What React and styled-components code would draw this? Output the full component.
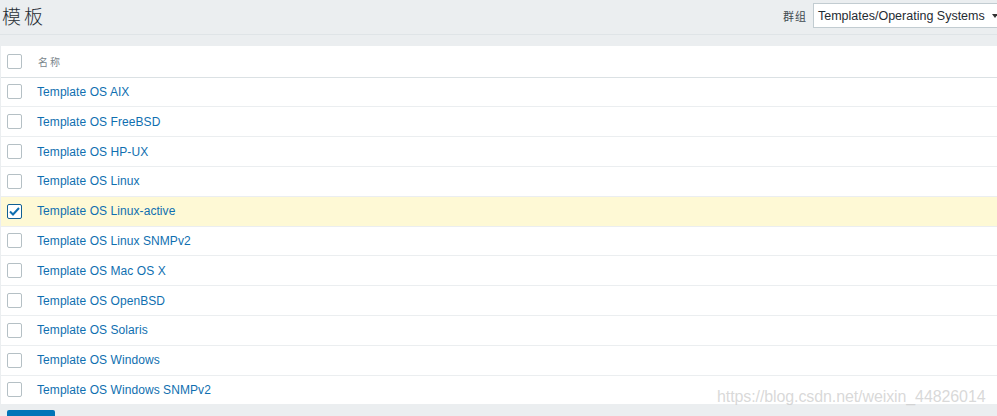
import React from 'react'
import styled, { createGlobalStyle } from 'styled-components'

const GlobalStyle = createGlobalStyle`
  html, body {
    margin: 0;
    padding: 0;
    background: #ebeef0;
    font-family: "Liberation Sans", Arial, sans-serif;
    overflow: hidden;
  }
`

const Page = styled.div`
  width: 997px;
  height: 416px;
  position: relative;
  overflow: hidden;
  background: #ebeef0;
`

const Header = styled.div`
  height: 35px;
  display: flex;
  align-items: center;
  justify-content: space-between;
  border-bottom: 1px solid #dfe4e7;
  box-sizing: border-box;
`

const Title = styled.h1`
  margin: 0 0 4px 2px;
  font-family: "Noto Sans CJK SC", sans-serif;
  font-weight: 300;
  font-size: 19px;
  letter-spacing: 3px;
  color: #1f2c33;
`

const Filter = styled.div`
  display: flex;
  align-items: center;
  gap: 6px;
  margin-bottom: 3px;
  margin-right: -6px;
`

const FilterLabel = styled.span`
  font-family: "Noto Sans CJK SC", sans-serif;
  font-size: 11px;
  color: #3e4a50;
  letter-spacing: 1px;
`

const Select = styled.div`
  width: 190px;
  height: 25px;
  box-sizing: border-box;
  background: #fff;
  border: 1px solid #c2ccd1;
  display: flex;
  align-items: center;
  padding-left: 4px;
  font-size: 12.5px;
  color: #1f2c33;
  position: relative;
  &::after {
    content: '';
    position: absolute;
    right: 4px;
    top: 10px;
    border-left: 3px solid transparent;
    border-right: 3px solid transparent;
    border-top: 4px solid #333;
  }
`

const Gap = styled.div`
  height: 11px;
`

const Table = styled.div`
  margin-left: 1px;
  background: #fff;
`

const Row = styled.div`
  height: ${p => (p.$head ? '31.6px' : '29.8px')};
  display: flex;
  align-items: center;
  box-sizing: border-box;
  border-bottom: 1px solid ${p => (p.$head ? '#dbe1e4' : '#ebeef0')};
  background: ${p => (p.$selected ? '#fef9d5' : '#fff')};
`

const Box = styled.span`
  width: 15px;
  height: 15px;
  box-sizing: border-box;
  margin: 0 15px 0 6px;
  border: 1px solid #b5c0c5;
  border-radius: 2px;
  background: #fff;
  display: flex;
  align-items: center;
  justify-content: center;
  ${p => p.$checked && 'border-color: #0f5f94;'}
`

const HeadLabel = styled.span`
  font-family: "Noto Sans CJK SC", sans-serif;
  font-size: 10px;
  color: #7a868c;
  letter-spacing: 2px;
  margin-left: 1px;
`

const Link = styled.a`
  font-size: 12px;
  letter-spacing: 0.07px;
  color: #0f6fb0;
  text-decoration: none;
`

const SaveButton = styled.div`
  width: 48px;
  height: 8px;
  margin: 5px 0 0 7px;
  background: #0275b8;
  border-radius: 2px 2px 0 0;
`

const Watermark = styled.div`
  position: absolute;
  left: 717px;
  top: 388px;
  font-size: 16px;
  letter-spacing: -0.1px;
  color: rgba(200, 200, 200, 0.7);
`

const templates = [
  'Template OS AIX',
  'Template OS FreeBSD',
  'Template OS HP-UX',
  'Template OS Linux',
  'Template OS Linux-active',
  'Template OS Linux SNMPv2',
  'Template OS Mac OS X',
  'Template OS OpenBSD',
  'Template OS Solaris',
  'Template OS Windows',
  'Template OS Windows SNMPv2',
]

const Check = () => (
  <svg width="11" height="9" viewBox="0 0 11 9">
    <path d="M1 4.5 L4 7.5 L10 1" fill="none" stroke="#0f6fb0" strokeWidth="2" />
  </svg>
)

const App = () => (
  <Page>
    <GlobalStyle />
    <Header>
      <Title>模板</Title>
      <Filter>
        <FilterLabel>群组</FilterLabel>
        <Select>Templates/Operating Systems</Select>
      </Filter>
    </Header>
    <Gap />
    <Table>
      <Row $head>
        <Box />
        <HeadLabel>名称</HeadLabel>
      </Row>
      {templates.map(name => {
        const selected = name === 'Template OS Linux-active'
        return (
          <Row key={name} $selected={selected}>
            <Box $checked={selected}>{selected && <Check />}</Box>
            <Link>{name}</Link>
          </Row>
        )
      })}
    </Table>
    <SaveButton />
    <Watermark>https://blog.csdn.net/weixin_44826014</Watermark>
  </Page>
)

export default App
